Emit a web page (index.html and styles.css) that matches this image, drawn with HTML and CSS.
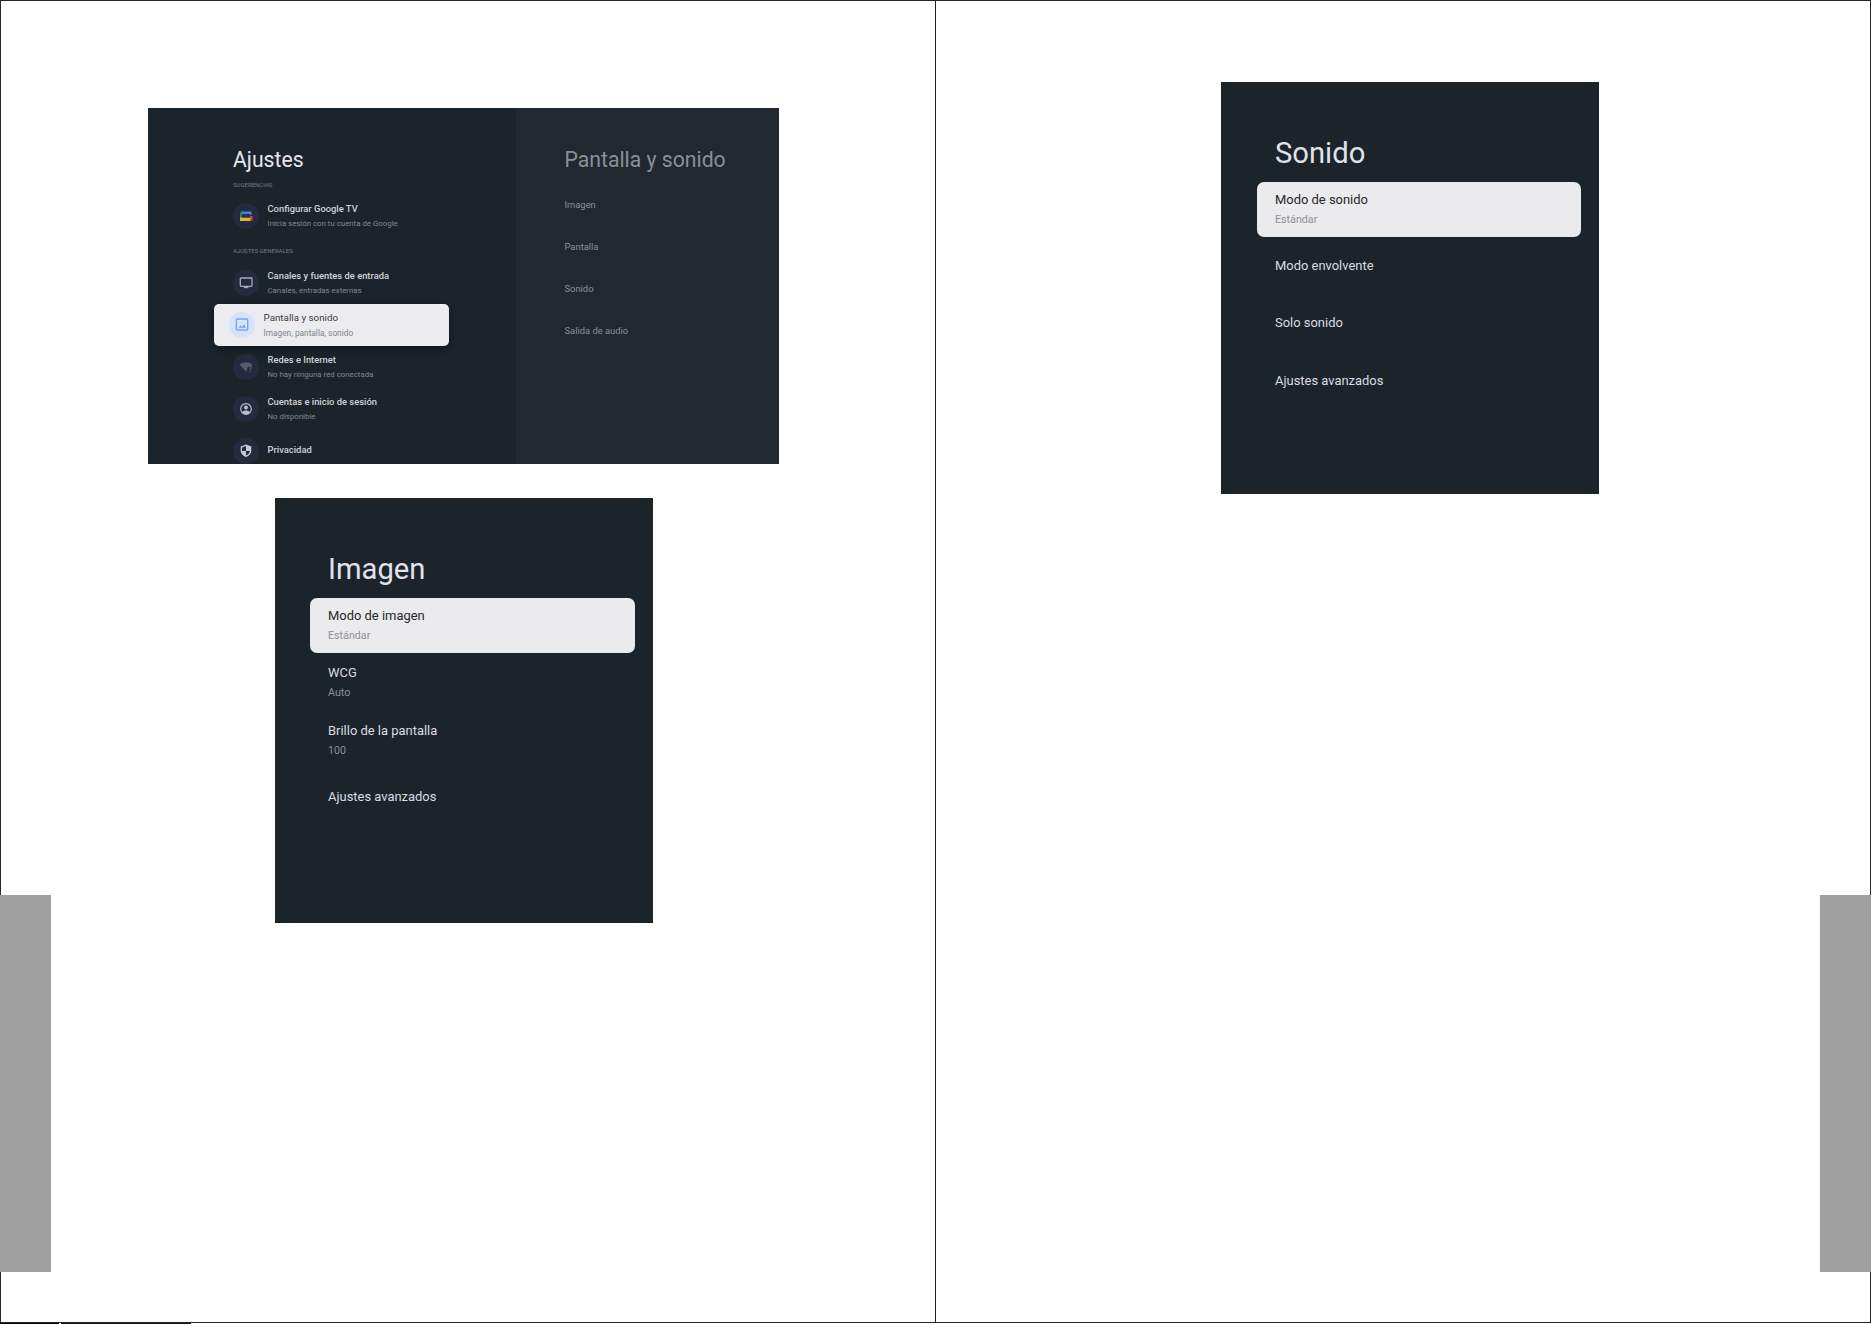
FILE: index.html
```
<!DOCTYPE html>
<html lang="es">

<head>
    <meta charset="utf-8">
    <title>Pantalla y sonido</title>
    <link rel="stylesheet" href="styles.css">
</head>

<body>
    <div class="spread">
        <!-- left page -->
        <div class="page page-left">
            <div class="tv">
                <div class="tv-main">
                    <h1>Ajustes</h1>
                    <h2 class="label1">SUGERENCIAS</h2>
                    <div class="row">
                        <div class="icon">
                            <svg width="26" height="26" viewBox="0 0 26 26">
                                <path d="M8 8.500h10.500v3.500H8z" fill="#4a80dc" />
                                <path d="M7 9.500h2v6H7z" fill="#2f8155" />
                                <path d="M17 13h2.800v4.500H17z" fill="#c93a35" />
                                <path d="M7 14.500h10.500v3.500H7z" fill="#e3b53a" />
                                <path d="M9 11h8v3.500H9z" fill="#27304c" />
                            </svg>
                        </div>
                        <div class="text">
                            <b>Configurar Google TV</b>
                            <span>Inicia sesión con tu cuenta de Google</span>
                        </div>
                    </div>
                    <h2 class="label2">AJUSTES GENERALES</h2>
                    <div class="row">
                        <div class="icon">
                            <svg width="26" height="26" viewBox="0 0 26 26" fill="none" stroke="#a4a9b7" stroke-width="1.300">
                                <rect x="7.300" y="8" width="11.700" height="8.300" rx="0.800" />
                                <path d="M11 17.500h4.500" />
                            </svg>
                        </div>
                        <div class="text">
                            <b>Canales y fuentes de entrada</b>
                            <span>Canales, entradas externas</span>
                        </div>
                    </div>
                    <div class="row active">
                        <div class="icon">
                            <svg width="26" height="26" viewBox="0 0 26 26" fill="none" stroke="#7ba3ee" stroke-width="1.400">
                                <rect x="7.300" y="7" width="11.400" height="11" rx="1" />
                                <path d="M9.500 15.800l2-2.500 1.500 1.600 2-2.700 2 3.600z" fill="#7ba3ee" stroke="none" />
                            </svg>
                        </div>
                        <div class="text">
                            <b>Pantalla y sonido</b>
                            <span>Imagen, pantalla, sonido</span>
                        </div>
                    </div>
                    <div class="row">
                        <div class="icon">
                            <svg width="26" height="26" viewBox="0 0 26 26">
                                <path d="M6.500 10.500c4-3 9-3 13 0l-1.500 2c-2-1.500-4 0-3.500 2l-1.500 3z" fill="#565b6c" />
                                <path d="M15.500 13.200c.5-1.500 3-1.200 2.800.3-.1 1-1.400 1.200-1.400 2.300M16.900 17v1" fill="none" stroke="#6d7283" />
                            </svg>
                        </div>
                        <div class="text">
                            <b>Redes e Internet</b>
                            <span>No hay ninguna red conectada</span>
                        </div>
                    </div>
                    <div class="row">
                        <div class="icon">
                            <svg width="26" height="26" viewBox="0 0 26 26">
                                <circle cx="13" cy="13" r="5.300" fill="none" stroke="#b9bec9" stroke-width="1.200" />
                                <circle cx="13" cy="11.400" r="2" fill="#b9bec9" />
                                <path d="M9 16.200c1.500-2.200 6.500-2.200 8 0-2 2.600-6 2.600-8 0z" fill="#b9bec9" />
                            </svg>
                        </div>
                        <div class="text">
                            <b>Cuentas e inicio de sesión</b>
                            <span>No disponible</span>
                        </div>
                    </div>
                    <div class="row">
                        <div class="icon">
                            <svg width="26" height="26" viewBox="0 0 26 26">
                                <path d="M13 6.500l5.300 2v4c0 3-2.300 5.500-5.300 6.500-3-1-5.300-3.500-5.300-6.500v-4z" fill="#c6cad4" />
                                <path d="M13 8v5H9V9.500zM13 13h4c-.3 2-2 3.700-4 4.500z" fill="#252b3f" />
                            </svg>
                        </div>
                        <div class="text">
                            <b>Privacidad</b>
                        </div>
                    </div>
                </div>
                <div class="tv-side">
                    <h1>Pantalla y sonido</h1>
                    <ul>
                        <li>Imagen</li>
                        <li>Pantalla</li>
                        <li>Sonido</li>
                        <li>Salida de audio</li>
                    </ul>
                </div>
            </div>

            <div class="menu menu-image">
                <h1>Imagen</h1>
                <div class="item active"><b>Modo de imagen</b><span>Estándar</span></div>
                <div class="item"><b>WCG</b><span>Auto</span></div>
                <div class="item"><b>Brillo de la pantalla</b><span>100</span></div>
                <div class="item single"><b>Ajustes avanzados</b></div>
            </div>
            <div class="tab tab-left"></div>
        </div>

        <!-- right page -->
        <div class="page page-right">
            <div class="menu menu-sound">
                <h1>Sonido</h1>
                <div class="item active"><b>Modo de sonido</b><span>Estándar</span></div>
                <div class="item single"><b>Modo envolvente</b></div>
                <div class="item single"><b>Solo sonido</b></div>
                <div class="item single"><b>Ajustes avanzados</b></div>
            </div>
            <div class="tab tab-right"></div>
        </div>
    </div>
    <div class="strip"></div>
</body>

</html>
```
FILE: styles.css
```
* {
    box-sizing: border-box;
    margin: 0;
    padding: 0;
}

body {
    background: #fff;
    font-family: Roboto, "Liberation Sans", sans-serif;
    overflow: hidden;
}

h1 {
    font-weight: 400;
}

ul {
    list-style: none;
}

/* two facing pages */
.spread {
    display: flex;
    width: 1871px;
    height: 1323px;
    border: 1px solid #2b2427;
}

.page {
    position: relative;
    height: 1321px;
}

.page-left {
    width: 935px;
    border-right: 1px solid #231f20;
    padding: 107px 0 0 147px;
}

.page-right {
    width: 934px;
    padding: 81px 0 0 285px;
}

.tab {
    position: absolute;
    top: 894px;
    width: 51px;
    height: 377px;
    background: #a0a0a0;
}

.tab-left {
    left: -1px;
}

.tab-right {
    right: -1px;
}

.strip {
    width: 191px;
    height: 1px;
    background: linear-gradient(to right, #000 59px, #fff 59px, #fff 61px, #14141c 61px);
}

/* settings screen */
.tv {
    display: flex;
    width: 631px;
    height: 356px;
    overflow: hidden;
    background: #1c242b;
}

.tv h1 {
    font-size: 21.2px;
    line-height: 26px;
}

.tv-main {
    width: 368px;
    padding: 39px 67px 0 66px;
    color: #cdd2d9;
}

.tv-main h1 {
    padding-left: 19px;
    color: #e4e7ec;
}

.tv-main h2 {
    padding-left: 19px;
    font-size: 6px;
    font-weight: 400;
    line-height: 8px;
    color: #757b83;
}

.tv-main .label1 {
    margin: 8px 0 6px;
}

.tv-main .label2 {
    margin: 10px 0 7px;
}

.row {
    display: flex;
    align-items: center;
    height: 42px;
    padding-left: 19px;
    border-radius: 5px;
}

.icon {
    width: 26px;
    height: 26px;
    margin-right: 8.5px;
    border-radius: 50%;
    background: #252b3f;
}

.icon svg {
    display: block;
}

.text {
    padding-bottom: 1px;
}

.text b,
.text span {
    display: block;
    white-space: nowrap;
}

.text b {
    font-size: 9.4px;
    font-weight: 500;
    line-height: 13px;
}

.text span {
    margin-top: 3px;
    font-size: 7.85px;
    line-height: 12px;
    color: #80868e;
}

.row:last-child .text {
    padding-bottom: 3px;
}

.row.active {
    padding-left: 15px;
    background: #ececee;
    color: #3b3e44;
    box-shadow: 0 3px 8px #10151b;
}

.row.active .icon {
    background: #d5e4fb;
}

.row.active b {
    font-size: 9.8px;
    font-weight: 400;
}

.row.active span {
    font-size: 8.3px;
}

.tv-side {
    flex: 1;
    padding: 39px 0 0 48.5px;
    background: #21282f;
    color: #8a9099;
}

.tv-side ul {
    margin-top: 11px;
}

.tv-side li {
    font-size: 9.4px;
    line-height: 42px;
}

/* picture and sound menus */
.menu {
    padding: 54px 18px 0 35px;
    background: #1c242b;
    color: #d9dce3;
}

.menu-image {
    width: 378px;
    height: 425px;
    margin: 34px 0 0 127px;
}

.menu-sound {
    width: 378px;
    height: 412px;
    padding-left: 36px;
}

.menu h1 {
    margin-bottom: 12px;
    padding-left: 18px;
    font-size: 29.2px;
    line-height: 34px;
    color: #e0e2ec;
}

.item {
    display: flex;
    flex-direction: column;
    justify-content: center;
    gap: 5px;
    height: 54.5px;
    margin-bottom: 3px;
    padding-left: 18px;
    border-radius: 7px;
}

.item b {
    font-size: 12.95px;
    font-weight: 400;
    line-height: 16px;
}

.item span {
    font-size: 10.7px;
    line-height: 14px;
    color: #8b9097;
}

.item.single {
    padding-bottom: 2px;
}

.item.active {
    background: #ebeaec;
    color: #26282c;
}
```
